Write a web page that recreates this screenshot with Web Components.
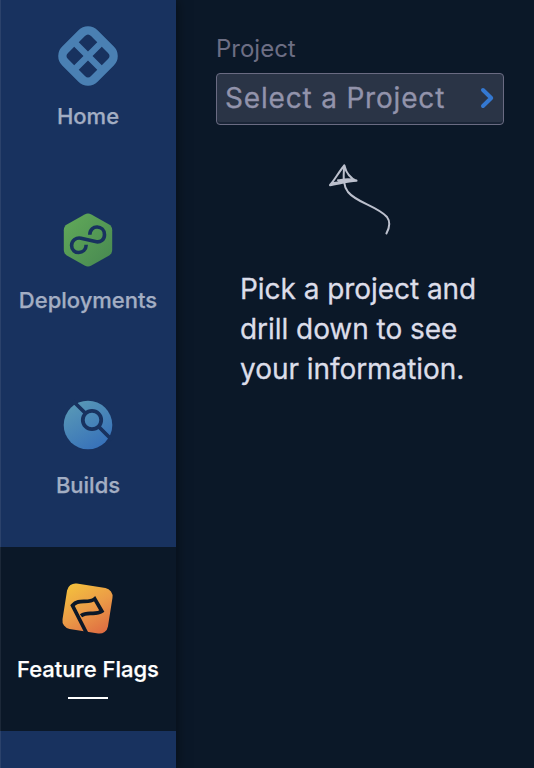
<!DOCTYPE html>
<html lang="en"><head><meta charset="utf-8"><title>Feature Flags</title>
<style>html,body{margin:0;height:100%;overflow:hidden;background:#0b1828;font-family:Inter,sans-serif}</style></head>
<body><app-shell></app-shell>
<script>
const define=(name,html)=>customElements.define(name,class extends HTMLElement{
  constructor(){super();this.attachShadow({mode:'open'}).innerHTML=html;}
});
define('nav-item',`<style>
:host{display:flex;flex-direction:column;align-items:center;box-sizing:border-box;height:184px;padding-top:22px;color:#a3aec3}
:host([tall]){height:185px}
:host([active]){background:#0b1828;color:#fff;padding-top:23px;box-shadow:inset 1px 0 #1c2838}
.icon{height:80px;width:80px}
.label{font-size:22px;font-weight:500;line-height:28px;margin-top:6px;letter-spacing:0;white-space:nowrap;-webkit-text-stroke:.25px currentColor}
:host([active]) .label{margin-top:5px}
.bar{display:none;width:40px;height:2px;background:#fff;margin-top:14px}
:host([active]) .bar{display:block}
::slotted(svg){display:block;width:80px;height:80px}
</style><div class="icon"><slot name="icon"></slot></div><div class="label"><slot></slot></div><div class="bar"></div>`);
define('side-nav',`<style>
:host{display:block;box-sizing:border-box;width:176px;height:768px;overflow:hidden;background:#18325f;box-shadow:inset 1px 0 #2b426b,0 0 12px #0008}
nav{display:flex;flex-direction:column;margin-top:-6px}
</style><nav>
<nav-item><svg slot="icon" viewBox="0 0 80 80"><g transform="rotate(45 40 40)"><rect x="15" y="15" width="50" height="50" rx="13.5" fill="#4a80b3"/><g fill="#18325f"><path d="M28 23.7h8.8v13.1h-13.1v-8.8q0-4.3 4.3-4.3zM43.2 23.7h8.8q4.3 0 4.3 4.3v8.8h-13.1zM23.7 43.2h13.1v13.1h-8.8q-4.3 0-4.3-4.3zM43.2 43.2h13.1v8.8q0 4.3-4.3 4.3h-8.8z"/></g></g></svg>Home</nav-item>
<nav-item tall><svg slot="icon" viewBox="0 0 80 80"><defs><linearGradient id="g" x2="1" y2="1"><stop stop-color="#62aa59"/><stop offset="1" stop-color="#478851"/></linearGradient></defs><path d="M36.6 14.5Q40 12.7 43.4 14.5L60.7 24.3Q64.2 26.3 64.2 30.2V49.8Q64.2 53.7 60.7 55.7L43.4 65.5Q40 67.3 36.6 65.5L19.3 55.7Q15.8 53.7 15.8 49.8V30.2Q15.8 26.3 19.3 24.3Z" fill="url(#g)"/><path d="M41.8 34.7C42 24 56.5 25 56.5 34.7C56.5 39.8 52.5 42.2 48.5 41.8L33 38.2C28 37.2 23.6 40.5 23.6 45.4C23.6 55 38 55 38.2 44.8" fill="none" stroke="#18325f" stroke-width="3.6"/></svg>Deployments</nav-item>
<nav-item><svg slot="icon" viewBox="0 0 80 80"><defs><linearGradient id="b" x1=".2" y1="0" x2=".8" y2="1"><stop stop-color="#5999b6"/><stop offset="1" stop-color="#356fba"/></linearGradient></defs><circle cx="40" cy="40" r="24.3" fill="url(#b)"/><g fill="none" stroke="#18325f" stroke-width="3.8"><circle cx="44" cy="35" r="9.2"/><path d="M37.2 28 25 16M50.5 41.5 64 55"/></g></svg>Builds</nav-item>
<nav-item active><svg slot="icon" viewBox="0 0 80 80"><defs><linearGradient id="f" x1=".1" y1="0" x2=".9" y2="1"><stop stop-color="#f4c03d"/><stop offset=".5" stop-color="#eb9c47"/><stop offset="1" stop-color="#df6c42"/></linearGradient></defs><rect x="16.5" y="15.5" width="46" height="46" rx="8.5" transform="rotate(9 39.5 38.5)" fill="url(#f)"/><path d="M38.5 63 24.5 35.5C31 27.7 40 34.5 46.7 28.8L53.9 41.2C47 46 40 40.5 33 45.7" fill="none" stroke="#0b1828" stroke-width="3.7"/></svg>Feature Flags</nav-item>
</nav>`);
define('project-select',`<style>
:host{display:block}
label{display:block;font-size:24px;line-height:30px;color:#6d6e84;letter-spacing:0}
button{display:flex;align-items:center;justify-content:space-between;width:288px;height:52px;margin:9px 0 0;padding:0 8px;box-sizing:border-box;border:1px solid #6a6b82;border-radius:4px;background:#2a3446;box-shadow:inset 0 -2px #1a2537;font:28px/36px Inter,sans-serif;letter-spacing:.82px;color:#9293ab}
span{padding-bottom:2px;-webkit-text-stroke:.3px currentColor}
svg{width:15px;height:24px;padding-bottom:2px}
</style><label>Project</label><button><span>Select a Project</span><svg viewBox="0 0 15 24"><path d="M3 4 11.2 12 3 20" fill="none" stroke="#3478d1" stroke-width="4" stroke-linecap="round" stroke-linejoin="round"/></svg></button>`);
define('empty-hint',`<style>
:host{display:block}
svg{display:block;width:100px;height:100px;margin:25px 0 0 94px}
p{margin:19px 0 0 24px;font-size:28px;line-height:40px;color:#dcdde9;letter-spacing:-.05px;white-space:nowrap;-webkit-text-stroke:.3px currentColor}
</style><svg viewBox="0 0 100 100" fill="none" stroke="#bcc0cd" stroke-width="2" stroke-linecap="round" stroke-linejoin="round"><path d="M76.4 83.5C80 77 80 71 77 67C67 56 47 53 38 42C33.5 36 33 29 34.3 15.5"/><path d="M34.3 15.5C28 23 24 31 20 35M34.5 16C36 22 40 28 46.5 30.8M46.5 30.8C38 31 28 34 20 35.2M46.5 30.5C38 28 32 30 28 30.3M22 33.2 43 30.5M29 31.7 40 31"/></svg><p>Pick a project and<br>drill down to see<br>your information.</p>`);
define('app-shell',`<style>
:host{display:flex;height:768px;background:#0b1828}
main{flex:1;min-width:0;padding:34px 0 0 40px}
side-nav{flex:none}
</style><side-nav></side-nav><main><project-select></project-select><empty-hint></empty-hint></main>`);
</script></body></html>
